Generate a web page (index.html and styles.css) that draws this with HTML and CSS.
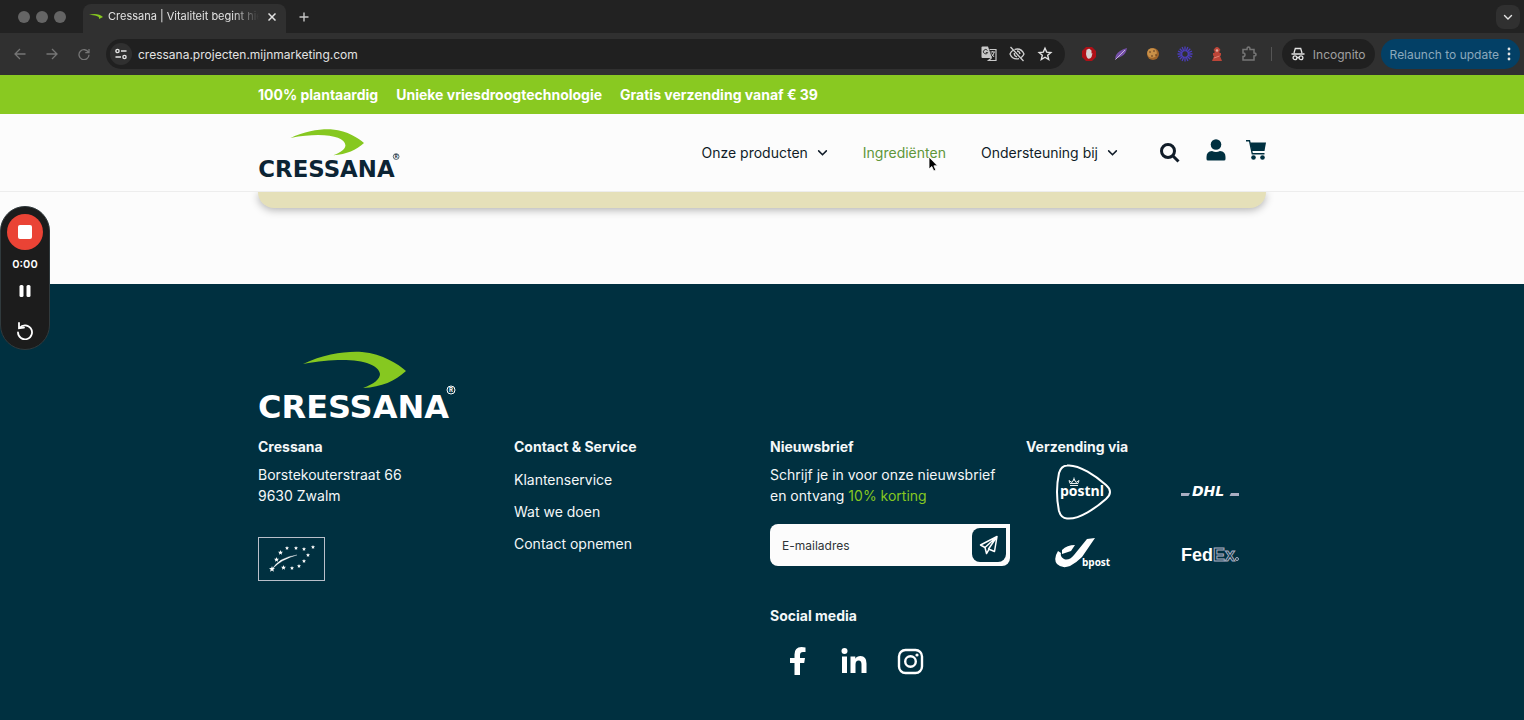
FILE: index.html
```html
<!DOCTYPE html>
<html lang="nl">
<head>
    <meta charset="UTF-8">
    <meta name="viewport" content="width=device-width, initial-scale=1.0">
    <title>Cressana | Vitaliteit begint hier</title>
    <link rel="stylesheet" href="styles.css">
</head>
<body>
    <!-- Shared shapes -->
    <svg class="sprite" aria-hidden="true">
        <symbol id="chevron" viewBox="0 0 10 10">
            <path d="M1.500 3.500L5 7L8.500 3.500" fill="none" stroke="currentColor" stroke-width="1.400" stroke-linecap="round"/>
        </symbol>
        <symbol id="star" viewBox="0 0 10 10">
            <path fill="#fff" d="M5 0L6.300 3.400L10 3.700L7.200 6L8.100 9.700L5 7.600L1.900 9.700L2.800 6L0 3.700L3.700 3.400Z"/>
        </symbol>
    </svg>

    <!-- Browser -->
    <div class="browser">
        <div class="tab-strip">
            <div class="lights"><span></span><span></span><span></span></div>
            <div class="tab">
                <svg width="14" height="8" viewBox="0 0 14 8"><path fill="#86c820" d="M0 2C5 0 11 1 14 4L10 6C11 3 6 2 0 2Z"/></svg>
                <span class="tab-title">Cressana | Vitaliteit begint hier</span>
                <button class="icon-btn tab-close" aria-label="Tab sluiten"><svg width="8" height="8" viewBox="0 0 8 8"><path d="M0.500 0.500L7.500 7.500M7.500 0.500L0.500 7.500" stroke="#e3e3e3" stroke-width="1.500"/></svg></button>
            </div>
            <button class="icon-btn new-tab" aria-label="Nieuw tabblad"><svg width="10" height="10" viewBox="0 0 10 10"><path d="M5 0.500V9.500M0.500 5H9.500" stroke="#c7c7c7" stroke-width="1.400"/></svg></button>
            <button class="icon-btn tab-search" aria-label="Tabbladen zoeken"><svg width="10" height="10"><use href="#chevron"/></svg></button>
        </div>
        <div class="toolbar">
            <button class="icon-btn tool dim" aria-label="Terug"><svg width="12" height="12" viewBox="0 0 12 12"><path d="M6 1L1 6L6 11M1 6H11.500" fill="none" stroke="currentColor" stroke-width="1.300"/></svg></button>
            <button class="icon-btn tool dim" aria-label="Vooruit"><svg width="12" height="12" viewBox="0 0 12 12"><path d="M6 1L11 6L6 11M11 6H0.500" fill="none" stroke="currentColor" stroke-width="1.300"/></svg></button>
            <button class="icon-btn tool dim" aria-label="Vernieuwen"><svg width="12" height="12" viewBox="0 0 12 12"><path d="M10.500 4.500A5 5 0 1 0 11 6.800M11 1V4.700H7.300" fill="none" stroke="currentColor" stroke-width="1.300"/></svg></button>
            <div class="omnibox">
                <button class="icon-btn site-info" aria-label="Sitegegevens"><svg width="12" height="12" viewBox="0 0 12 12" fill="none" stroke="#e3e3e3" stroke-width="1.400"><circle cx="2.500" cy="3" r="1.600"/><path d="M6 3H11.500M0.500 9H6"/><circle cx="9.500" cy="9" r="1.600"/></svg></button>
                <input class="url" type="text" aria-label="Adres" value="cressana.projecten.mijnmarketing.com">
                <button class="icon-btn omni-icon" aria-label="Vertalen"><svg width="16" height="16" viewBox="0 0 16 16"><path fill="#c9c9c9" d="M1.500 0.500H7L11 12H1.500Q0.500 12 0.500 11V1.500Q0.500 0.500 1.500 0.500Z"/><path d="M6.500 4.500A2.200 2.200 0 1 0 6.700 6.500H4.800" fill="none" stroke="#333"/><path d="M8.500 3.500H15V14.500H7.500L10.500 12" fill="none" stroke="#c9c9c9" stroke-width="1.200"/><path d="M9.500 6H14M11.700 5V6M13.200 6Q12.500 9.500 10.500 10.500M10.500 7.500L13 11" fill="none" stroke="#c9c9c9"/></svg></button>
                <button class="icon-btn omni-icon" aria-label="Cookies geblokkeerd"><svg width="16" height="16" viewBox="0 0 16 16" fill="none" stroke="#d0d0d0" stroke-width="1.300"><path d="M5.500 3.500Q12 1.500 15 8Q14 10.300 12.300 11.500M10 12.700Q3.500 14 1 8Q2 5.500 4 4.300M1.500 1L14.500 15"/><path d="M8 5Q10.500 5 11 8M5.300 7Q5 10 8 10.800"/></svg></button>
                <button class="icon-btn omni-icon" aria-label="Bladwijzer"><svg width="16" height="16" viewBox="0 0 16 16"><path d="M8 2.200L9.700 6.100L13.900 6.500L10.700 9.300L11.700 13.500L8 11.200L4.300 13.500L5.300 9.300L2.100 6.500L6.300 6.100Z" fill="none" stroke="#e3e3e3" stroke-width="1.400"/></svg></button>
            </div>
            <div class="extensions">
                <button class="icon-btn tool" aria-label="Blocker"><svg width="16" height="16" viewBox="0 0 16 16"><path fill="#ad1017" d="M5 1H11L15 5V11L11 15H5L1 11V5Z"/><path fill="#d5d0d0" d="M5 8L5.500 4Q6 3 6.700 3.500Q7.300 2.500 8 3Q9 2.500 9.300 3.700Q10.300 3.500 10.500 5V7.500L11.500 7.300L10.500 11Q9.500 13 7.500 12.800Q5.500 12 5 8Z"/></svg></button>
                <button class="icon-btn tool" aria-label="Veer"><svg width="14" height="14" viewBox="0 0 14 14"><path fill="#7550a8" d="M1 13Q1 7 6 4Q9 2 13 1Q12 7 8 9Q5 11 2 11Z"/><path d="M1.500 12.500L11 3" stroke="#c8b1dc"/></svg></button>
                <button class="icon-btn tool" aria-label="Cookies"><svg width="14" height="14" viewBox="0 0 14 14"><circle cx="7" cy="7" r="6" fill="#a0652a"/><circle cx="6" cy="6" r="4.800" fill="#c99048"/><g fill="#50301e"><circle cx="4" cy="5" r="0.800"/><circle cx="8" cy="4" r="0.800"/><circle cx="6" cy="9" r="0.800"/><circle cx="10" cy="8" r="0.800"/></g></svg></button>
                <button class="icon-btn tool" aria-label="Loom"><svg width="16" height="16" viewBox="0 0 16 16" stroke="#4b3dba" stroke-width="1.300" fill="none"><path d="M8 0.500V15.500M0.500 8H15.500M2.700 2.700L13.300 13.300M13.300 2.700L2.700 13.300M5.100 1L10.900 15M10.900 1L5.100 15M1 5.100L15 10.900M15 5.100L1 10.900"/><circle cx="8" cy="8" r="2" fill="#303030" stroke="#303030"/></svg></button>
                <button class="icon-btn tool" aria-label="Toren"><svg width="14" height="16" viewBox="0 0 14 16"><path fill="#bd4538" d="M5 2Q7 0 9 2L10.500 4L9.500 5V7H11V9.500L10 10L12 15H2L4 10L3 9.500V7H4.500V5L3.500 4Z"/><circle cx="7" cy="4.500" r="1.300" fill="#e1ab9f"/><path d="M4 12L9.500 10" stroke="#e38173"/></svg></button>
                <button class="icon-btn tool dim" aria-label="Extensies"><svg width="16" height="16" viewBox="0 0 16 16"><path d="M2 3.500H6Q6 1 7.500 1Q9 1 9 3.500H13V7Q15 7 15 8.500Q15 10 13 10V14H2V10.500Q4 10.500 4 8.700Q4 7 2 7Z" fill="none" stroke="currentColor" stroke-width="1.500"/></svg></button>
            </div>
            <span class="divider"></span>
            <button class="pill incognito"><svg width="14" height="14" viewBox="0 0 14 14" fill="none" stroke="#e3e3e3" stroke-width="1.300"><path d="M3 6L4.300 1.500H9.700L11 6M0.500 7H13.500"/><circle cx="4" cy="10.700" r="1.900"/><circle cx="10" cy="10.700" r="1.900"/><path d="M6 10.500H8"/></svg>Incognito</button>
            <button class="pill relaunch">Relaunch to update<svg width="4" height="14" viewBox="0 0 4 14" fill="#e3e3e3"><circle cx="2" cy="2" r="1.400"/><circle cx="2" cy="7" r="1.400"/><circle cx="2" cy="12" r="1.400"/></svg></button>
        </div>
    </div>

    <!-- USP bar -->
    <div class="usp-bar">
        <div class="container usps">
            <span>100% plantaardig</span>
            <span>Unieke vriesdroogtechnologie</span>
            <span>Gratis verzending vanaf € 39</span>
        </div>
    </div>

    <!-- Header -->
    <header class="header">
        <div class="container header-inner">
            <a href="#" aria-label="Cressana">
                <svg class="header-logo" viewBox="0 0 198 70">
                    <path fill="#86c820" d="M45 14C66 4 88 1 104 2C125 4 140 14 148 21C137 31 124 37 105 38C116 34 122 29 122 24C121 12 92 5 45 14Z"/>
                    <text class="logo-text" x="0" y="68">CRESSANA</text>
                    <circle cx="193" cy="40" r="4" fill="none" stroke="currentColor"/>
                    <text class="logo-mark" x="193" y="42">R</text>
                </svg>
            </a>
            <nav class="nav">
                <a href="#">Onze producten <svg width="11" height="11"><use href="#chevron"/></svg></a>
                <a href="#" class="active">Ingrediënten</a>
                <a href="#">Ondersteuning bij <svg width="11" height="11"><use href="#chevron"/></svg></a>
            </nav>
            <div class="header-actions">
                <button class="icon-btn" aria-label="Zoeken"><svg width="20" height="20" viewBox="0 0 20 20" fill="none" stroke="currentColor" stroke-width="3"><circle cx="8" cy="8" r="6.500"/><path d="M12.500 12.500L18.500 18.500"/></svg></button>
                <a href="#" class="raised" aria-label="Account"><svg width="20" height="22" viewBox="0 0 20 22" fill="#003040"><circle cx="10" cy="5.500" r="5.300"/><path d="M6 12Q10 14 14 12Q19.500 12.500 19.500 18V20Q19.500 21.500 18 21.500H2Q0.500 21.500 0.500 20V18Q0.500 12.500 6 12Z"/></svg></a>
                <a href="#" class="raised" aria-label="Winkelwagen"><svg width="20" height="20" viewBox="0 0 20 20" fill="#003040"><path d="M4 2.500H20L18.500 11H6Z"/><path d="M0 0.700H3.500L6.300 13.800H18.500" fill="none" stroke="#003040" stroke-width="1.400"/><circle cx="7.500" cy="17.500" r="2.300"/><circle cx="16.500" cy="17.500" r="2.300"/></svg></a>
            </div>
        </div>
    </header>

    <main class="content">
        <div class="container card-end"></div>
    </main>

    <!-- Footer -->
    <footer class="footer">
        <div class="container">
            <svg class="footer-logo" viewBox="0 0 198 70">
                <path fill="#86c820" d="M45 14C66 4 88 1 104 2C125 4 140 14 148 21C137 31 124 37 105 38C116 34 122 29 122 24C121 12 92 5 45 14Z"/>
                <text class="logo-text" x="0" y="68">CRESSANA</text>
                <circle cx="193" cy="40" r="4" fill="none" stroke="currentColor"/>
                <text class="logo-mark" x="193" y="42">R</text>
            </svg>
            <div class="footer-grid">
                <section>
                    <h2>Cressana</h2>
                    <p>Borstekouterstraat 66<br>9630 Zwalm</p>
                    <svg class="eu-leaf" viewBox="0 0 67 44">
                        <rect x="0.500" y="0.500" width="66" height="43" fill="none" stroke="#b9bfca"/>
                        <g>
                            <use href="#star" x="27" y="9" width="4" height="4"/>
                            <use href="#star" x="36" y="9" width="4" height="4"/>
                            <use href="#star" x="44" y="10" width="4" height="4"/>
                            <use href="#star" x="53" y="8" width="4" height="4"/>
                            <use href="#star" x="48" y="16" width="4" height="4"/>
                            <use href="#star" x="44" y="22" width="4" height="4"/>
                            <use href="#star" x="39" y="27" width="4" height="4"/>
                            <use href="#star" x="32" y="29" width="4" height="4"/>
                            <use href="#star" x="23" y="28" width="5" height="5"/>
                            <use href="#star" x="16" y="20" width="5" height="5"/>
                            <use href="#star" x="20" y="13" width="5" height="5"/>
                            <use href="#star" x="11" y="29" width="6" height="6"/>
                        </g>
                        <path d="M14 32Q22 20 39 18Q24 22 14 32Z" fill="#fff" stroke="#fff" stroke-width="0.300"/>
                    </svg>
                </section>
                <section>
                    <h2>Contact &amp; Service</h2>
                    <ul class="links">
                        <li><a href="#">Klantenservice</a></li>
                        <li><a href="#">Wat we doen</a></li>
                        <li><a href="#">Contact opnemen</a></li>
                    </ul>
                </section>
                <section>
                    <h2>Nieuwsbrief</h2>
                    <p>Schrijf je in voor onze nieuwsbrief<br>en ontvang <span class="accent">10% korting</span></p>
                    <form class="newsletter">
                        <input type="email" aria-label="E-mailadres" placeholder="E-mailadres">
                        <button type="button" aria-label="Versturen"><svg width="20" height="20" viewBox="0 0 20 20" fill="none" stroke="#fff" stroke-width="1.500" stroke-linejoin="round"><path d="M18 1.500L1.500 10L6 12.500L18 1.500L15.500 16.500L9.500 14L18 1.500M6 12.500L7.500 18.500L10 14.300"/></svg></button>
                    </form>
                    <h2>Social media</h2>
                    <div class="socials">
                        <a href="#" aria-label="Facebook"><svg width="28" height="28" viewBox="0 0 28 28"><path fill="#fff" d="M10.500 28V16H6V11H10.500V7.500Q10.500 0 17.500 0Q20 0 21.500 0.400V5H19Q16 5 16 8V11H21L20.200 16H16V28Z"/></svg></a>
                        <a href="#" aria-label="LinkedIn"><svg width="28" height="28" viewBox="0 0 28 28" fill="#fff"><circle cx="4.500" cy="4" r="3"/><path d="M2 9.500H7V26H2ZM10.500 9.500H15.300V11.800Q16.800 9 20.500 9Q26.500 9 26.500 16.500V26H21.500V17.500Q21.500 13.500 18.700 13.500Q15.500 13.500 15.500 17.500V26H10.500Z"/></svg></a>
                        <a href="#" aria-label="Instagram"><svg width="28" height="28" viewBox="0 0 28 28" fill="none" stroke="#fff" stroke-width="2.400"><rect x="3" y="3" width="23" height="23" rx="6.500"/><circle cx="14.500" cy="14.500" r="5.300"/><circle cx="21" cy="8" r="1.600" fill="#fff" stroke="none"/></svg></a>
                    </div>
                </section>
                <section>
                    <h2>Verzending via</h2>
                    <div class="carriers">
                        <svg width="58" height="56" viewBox="0 0 58 56">
                            <path d="M13 1.500C25 0 43 13 52 21Q60 28 52 35C43 43 25 56 13 54.500Q7 54 5 47Q1 28 5 9Q7 2 13 1.500Z" fill="none" stroke="#fff" stroke-width="2"/>
                            <path d="M16 21.500H24M16 19.500L15 16.500L18 18.500L20 15L22 18.500L25 16.500L24 19.500ZM20 13.500V17" fill="none" stroke="#fff" stroke-width="0.900"/>
                            <text class="carrier-name" x="6" y="32">postnl</text>
                        </svg>
                        <svg width="58" height="12" viewBox="0 0 58 12">
                            <path d="M0 7H9L7.500 10H0ZM50 7H58V10H48.500Z" fill="#a9aec2"/>
                            <text class="dhl" x="11" y="10">DHL</text>
                        </svg>
                        <svg width="58" height="32" viewBox="0 0 58 32">
                            <path fill="#fff" d="M8 12Q13 7 21 7L17 13L8 16ZM41 0L33 1L20 17Q15 23 10 21Q6 19 7 15L4 13Q-1 21 3 26Q8 31 16 28Q22 25 28 19Z"/>
                            <text class="bpost" x="28" y="28">bpost</text>
                        </svg>
                        <svg width="58" height="20" viewBox="0 0 58 20">
                            <text class="fedex" x="0" y="17">Fed<tspan class="fedex-ex">Ex</tspan></text>
                            <circle cx="56" cy="15" r="1.500" fill="none" stroke="#a9aec2"/>
                        </svg>
                    </div>
                </section>
            </div>
        </div>
    </footer>

    <!-- Recorder -->
    <div class="recorder">
        <button class="icon-btn stop" aria-label="Stop"><span></span></button>
        <span class="time">0:00</span>
        <button class="icon-btn" aria-label="Pauze"><svg width="12" height="14" viewBox="0 0 12 14" fill="#fff"><rect x="0.500" y="1" width="4" height="12" rx="1.500"/><rect x="7.500" y="1" width="4" height="12" rx="1.500"/></svg></button>
        <button class="icon-btn restart" aria-label="Opnieuw"><svg width="18" height="18" viewBox="0 0 18 18" fill="none" stroke="#fff" stroke-width="1.800" stroke-linecap="round"><path d="M3.500 6A7 7 0 1 1 2 10.500M3 1V6.200L8 5.700"/></svg></button>
    </div>

    <svg class="cursor" width="10" height="16" viewBox="0 0 10 16"><path d="M1 1V13L3.800 10.500L5.800 15L7.800 14L5.900 9.800H9.500Z" fill="#000" stroke="#fff" stroke-width="0.800"/></svg>
</body>
</html>
```
FILE: styles.css
```css
* {
    margin: 0;
    padding: 0;
    box-sizing: border-box;
}

body {
    display: flex;
    flex-direction: column;
    min-height: 100vh;
    font-family: Inter, "Liberation Sans", sans-serif;
    font-size: 14px;
    line-height: 21px;
    color: #101c28;
    background: #fcfcfc;
}

a {
    color: inherit;
    text-decoration: none;
}

svg {
    display: block;
    flex-shrink: 0;
}

button,
input {
    font: inherit;
    color: inherit;
    border: none;
    background: none;
}

button {
    cursor: pointer;
}

.sprite {
    position: absolute;
    width: 0;
    height: 0;
}

.icon-btn {
    display: flex;
    align-items: center;
    justify-content: center;
    flex-shrink: 0;
}

.container {
    width: 100%;
    max-width: 1008px;
    margin: 0 auto;
}

/* Browser */
.browser {
    background: #222222;
    color: #e3e3e3;
    font-size: 12px;
}

.tab-strip {
    display: flex;
    align-items: center;
    height: 33px;
    padding: 0 4px 0 18px;
}

.lights {
    display: flex;
    gap: 6px;
    margin-right: 17px;
}

.lights span {
    width: 12px;
    height: 12px;
    border-radius: 50%;
    background: #656565;
}

.tab {
    display: flex;
    align-items: center;
    align-self: flex-end;
    gap: 5px;
    width: 203px;
    height: 29px;
    padding: 0 6px 4px;
    border-radius: 8px 8px 0 0;
    background: #303030;
    font-size: 11px;
}

.tab-title {
    flex: 1;
    overflow: hidden;
    white-space: nowrap;
    mask-image: linear-gradient(to right, #000 82%, transparent);
}

.tab-close {
    width: 16px;
    height: 16px;
}

.new-tab {
    width: 20px;
    height: 20px;
    margin-left: 8px;
}

.tab-search {
    width: 24px;
    height: 24px;
    margin-left: auto;
    border-radius: 8px;
    background: #303030;
}

.toolbar {
    display: flex;
    align-items: center;
    height: 42px;
    padding: 0 4px;
    background: #303030;
}

.tool {
    width: 32px;
    height: 28px;
}

.dim {
    color: #757575;
}

.omnibox {
    display: flex;
    align-items: center;
    flex: 1;
    height: 30px;
    margin: 0 8px 0 6px;
    padding: 0 6px 0 4px;
    border-radius: 16px;
    background: #202020;
}

.site-info {
    width: 22px;
    height: 22px;
    border-radius: 50%;
    background: #303030;
}

.url {
    flex: 1;
    min-width: 0;
    padding: 0 6px;
}

.omni-icon {
    width: 28px;
    height: 28px;
}

.extensions {
    display: flex;
}

.divider {
    width: 1px;
    height: 14px;
    margin: 0 10px 0 6px;
    background: #555555;
}

.pill {
    display: flex;
    align-items: center;
    gap: 8px;
    height: 30px;
    padding: 0 9px;
    border-radius: 16px;
    font-size: 12px;
    white-space: nowrap;
}

.incognito {
    margin-right: 6px;
    background: #202020;
    color: #a0a0a0;
}

.relaunch {
    background: #034066;
    color: #8ba9bd;
}

/* USP bar */
.usp-bar {
    padding: 9px 0;
    background: #89c921;
    color: #ffffff;
    font-weight: 700;
}

.usps {
    display: flex;
    gap: 18px;
}

/* Header */
.header {
    position: relative;
    z-index: 1;
    background: #fcfcfc;
    border-bottom: 1px solid #ededed;
}

.header-inner {
    display: flex;
    align-items: center;
    height: 77px;
}

.header-logo {
    width: 142px;
    height: 50px;
    color: #0c2434;
}

.footer-logo {
    width: 198px;
    height: 70px;
    color: #ffffff;
}

.logo-text {
    font-family: "DejaVu Sans", sans-serif;
    font-size: 32px;
    font-weight: 700;
    fill: currentColor;
}

.logo-mark {
    font-size: 6px;
    font-weight: 700;
    text-anchor: middle;
    fill: currentColor;
}

.nav {
    display: flex;
    gap: 35px;
    margin-left: auto;
}

.nav a {
    display: flex;
    align-items: center;
    gap: 9px;
}

.nav .active {
    color: #60963a;
}

.header-actions {
    display: flex;
    align-items: center;
    gap: 20px;
    margin-left: 42px;
}

.header-actions button {
    margin-right: 6px;
}

.raised {
    padding-bottom: 6px;
}

/* Content */
.content {
    padding-bottom: 76px;
}

.card-end {
    height: 16px;
    border-radius: 0 0 24px 24px;
    background: #e5e0b9;
    box-shadow: 0 2px 8px rgba(0, 0, 0, 0.3);
}

/* Footer */
.footer {
    flex: 1;
    padding: 66px 0 42px;
    background: #003040;
    color: #f4f7f8;
}

.footer-grid {
    display: grid;
    grid-template-columns: repeat(4, 1fr);
    gap: 16px;
    margin-top: 16px;
}

.footer h2 {
    margin-bottom: 7px;
    font-size: 14px;
    line-height: 21px;
    font-weight: 700;
}

.eu-leaf {
    width: 67px;
    height: 44px;
    margin-top: 31px;
}

.links {
    list-style: none;
}

.links li {
    line-height: 32px;
}

.accent {
    color: #86c820;
}

.newsletter {
    display: flex;
    align-items: center;
    height: 42px;
    margin: 18px 0 39px;
    padding: 4px;
    border-radius: 8px 0 8px 8px;
    background: #fcfcfc;
}

.newsletter input {
    width: 100%;
    min-width: 0;
    padding: 0 8px;
    outline: none;
    font-size: 12px;
}

.newsletter input::placeholder {
    color: #303438;
    opacity: 1;
}

.newsletter button {
    display: flex;
    align-items: center;
    justify-content: center;
    flex-shrink: 0;
    width: 34px;
    height: 34px;
    border-radius: 8px 0 8px 8px;
    background: #003040;
}

.socials {
    display: flex;
    gap: 28px;
    padding: 14px 14px 0;
}

.carriers {
    display: grid;
    grid-template-columns: 1fr 1fr;
    gap: 18px 14px;
    align-items: center;
    justify-items: center;
}

.carriers text {
    font-family: "Open Sans", sans-serif;
    font-weight: 700;
    fill: #ffffff;
}

.carriers .carrier-name {
    font-size: 14px;
}

.carriers .dhl {
    font-family: "DejaVu Sans", sans-serif;
    font-size: 14px;
    font-style: italic;
}

.carriers .bpost {
    font-size: 10px;
}

.carriers .fedex {
    font-family: "Liberation Sans", sans-serif;
    font-size: 18px;
}

.carriers .fedex-ex {
    fill: #003040;
    stroke: #a9aec2;
    stroke-width: 1px;
}

/* Recorder */
.recorder {
    position: fixed;
    top: 206px;
    left: 0;
    z-index: 2;
    display: flex;
    flex-direction: column;
    align-items: center;
    width: 50px;
    padding: 7px 0 9px;
    border: 1px solid #303a3d;
    border-radius: 25px;
    background: #1c1c1c;
    color: #ffffff;
}

.stop {
    width: 36px;
    height: 36px;
    border-radius: 50%;
    background: #ea4335;
}

.stop span {
    width: 14px;
    height: 14px;
    border-radius: 2px;
    background: #ffffff;
}

.time {
    margin: 4px 0 9px;
    font-size: 11px;
    font-weight: 600;
}

.restart {
    margin-top: 24px;
}

.cursor {
    position: absolute;
    top: 156px;
    left: 928px;
    z-index: 3;
}
```
